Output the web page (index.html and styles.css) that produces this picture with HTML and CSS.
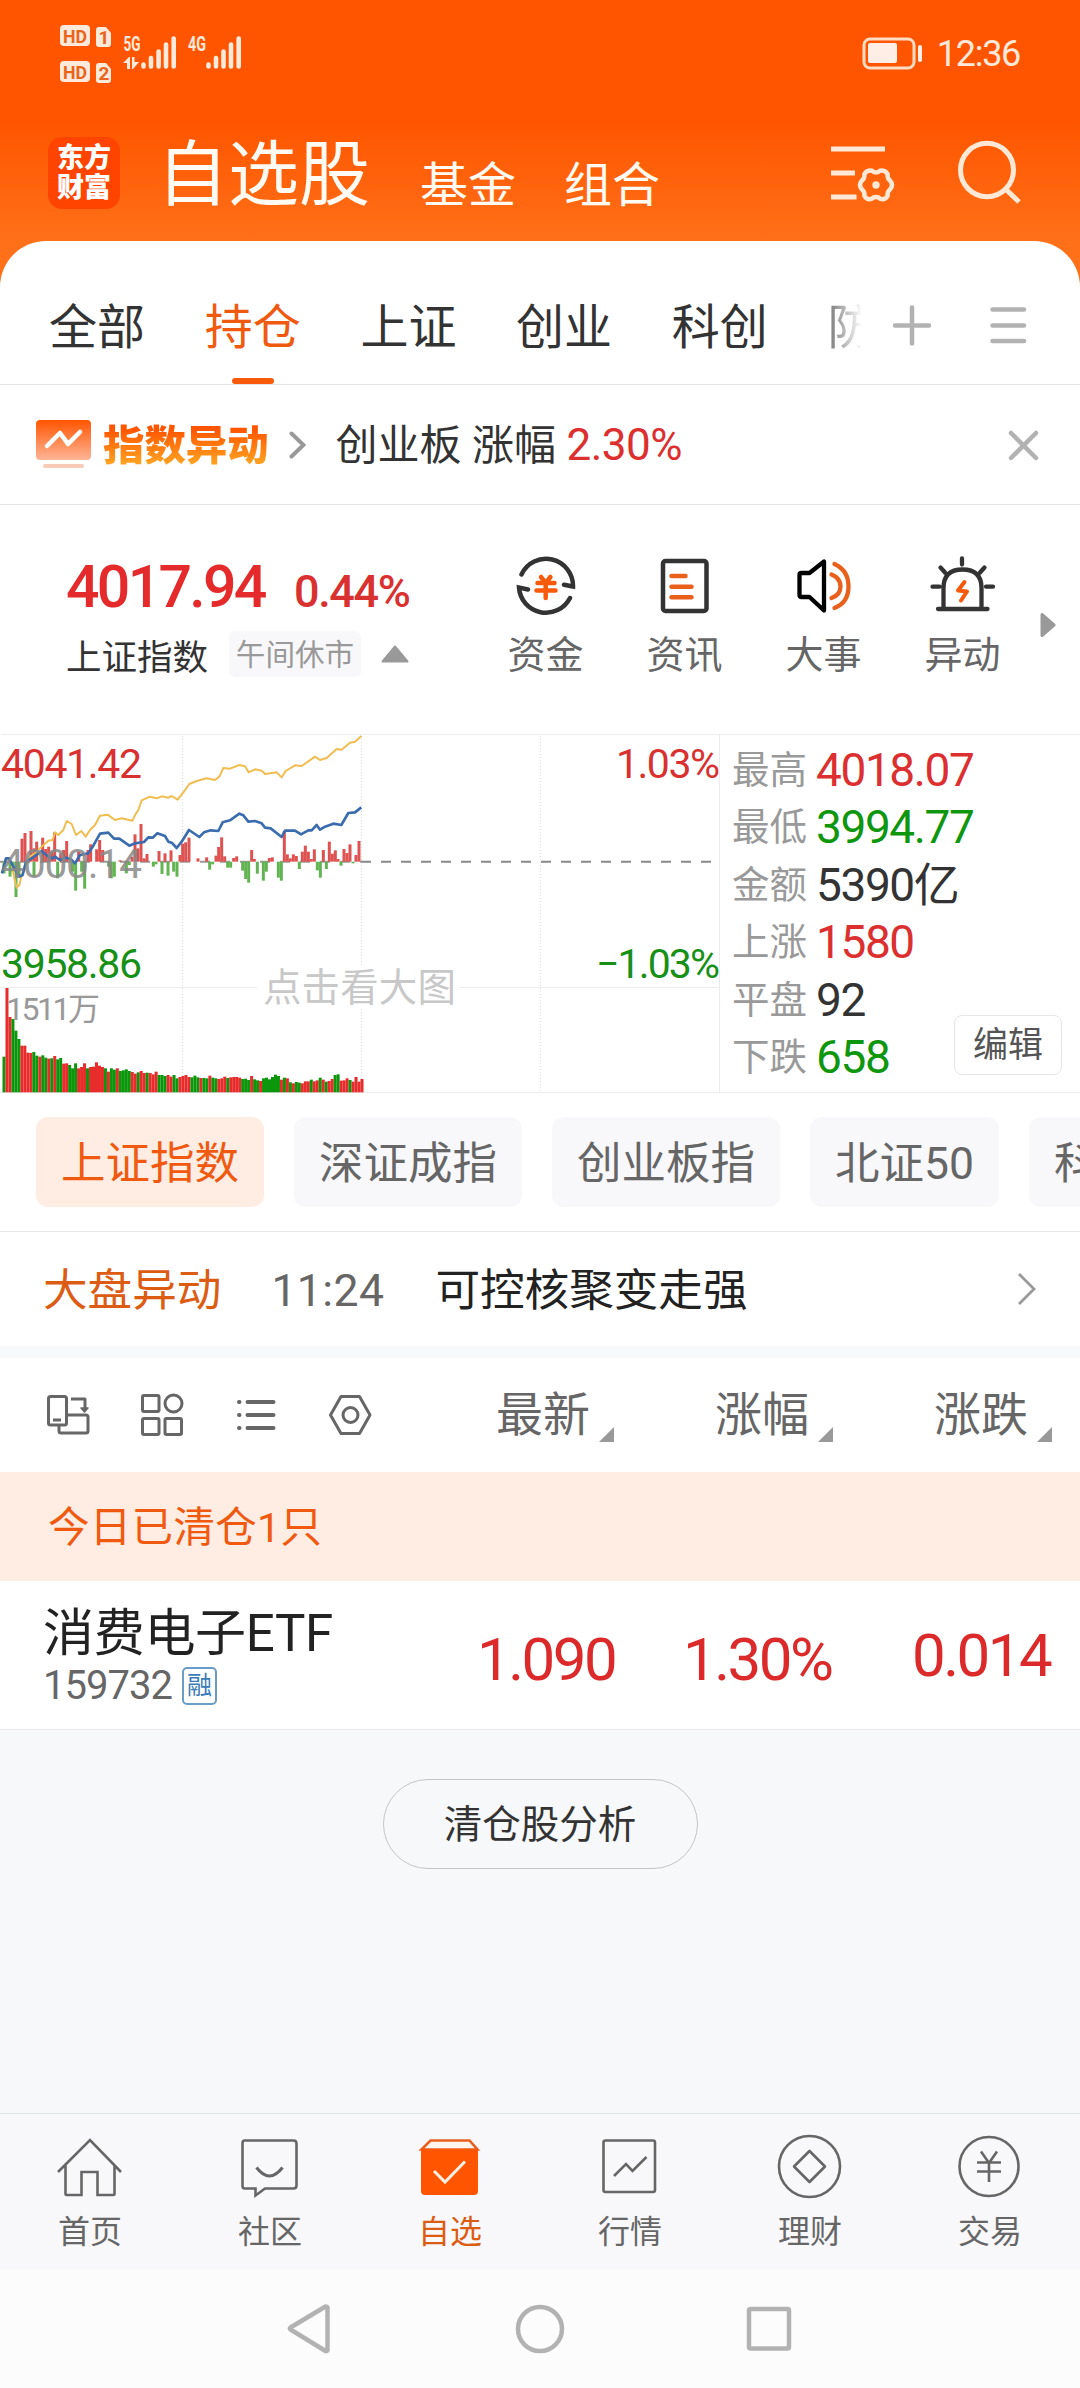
FILE: index.html
```html
<!DOCTYPE html>
<html lang="zh-CN">
<head>
<meta charset="utf-8">
<title>自选股</title>
<link rel="stylesheet" href="styles.css">
</head>
<body>
<div class="app">
  <div class="top">
    <div class="status">
      <svg class="status-left" width="190" height="62" viewBox="58 22 190 62" fill="#ffe9db">
        <rect x="60" y="25" width="30" height="21" rx="4"/>
        <rect x="60" y="61" width="30" height="21" rx="4"/>
        <path d="M99 27h7l5 6v11q0 3-3 3h-9q-3 0-3-3V30q0-3 3-3zM99 63h7l5 6v11q0 3-3 3h-9q-3 0-3-3V66q0-3 3-3z"/>
        <g class="hd"><text x="63" y="42.500" textLength="24" lengthAdjust="spacingAndGlyphs">HD</text><text x="63" y="78.500" textLength="24" lengthAdjust="spacingAndGlyphs">HD</text><text x="98.500" y="44">1</text><text x="98.500" y="80">2</text></g>
        <g class="net"><text x="123.500" y="51" textLength="17" lengthAdjust="spacingAndGlyphs">5G</text><text x="188" y="51" textLength="18" lengthAdjust="spacingAndGlyphs">4G</text></g>
        <path d="M123 63l6-6h1v12h-3v-6zM132 57h2.500v5h4.500l-6 7h-1z"/>
        <g stroke="#ffe9db" stroke-width="4.600" stroke-linecap="round"><path d="M143.500 64.500v2M151 58v8.500M158.600 51.500v15M166 44.500v22M173.700 38.500v28M208.500 64.500v2M216 58v8.500M223.500 51.500v15M231 44.500v22M238.700 38.500v28"/></g>
      </svg>
      <div class="status-right">
        <svg width="62" height="33" viewBox="862 37 62 33"><rect x="864" y="39" width="50" height="29" rx="6" fill="none" stroke="#ffdcc4" stroke-width="3"/><rect x="868" y="43" width="29" height="20" rx="2" fill="#ffeee6"/><rect x="918" y="45" width="4" height="17" rx="2" fill="#ffeee6"/></svg>
        <span class="clock">12:36</span>
      </div>
    </div>
    <div class="header">
      <div class="logo"><span>东方</span><span>财富</span></div>
      <span class="h-main">自选股</span><span class="h-sub">基金</span><span class="h-sub">组合</span>
      <svg class="h-icons" width="196" height="70" viewBox="830 140 196 70" fill="none" stroke="#ffe9d6" stroke-width="5">
        <path d="M831 149h54M831 173h24M831 197h25.500"/>
        <path stroke-linejoin="round" stroke-width="4.500" d="M876 172.500q2.500 0 4-1.700 4.500-1 7.500 3-.3 4.500 2.500 6.700 4 4.500 0 9-2.800 2-2.500 6.500-2.500 4.500-7.500 2.700-1.500-1.700-4-1.700t-4 1.700q-5 1.800-7.500-2.700.3-4.500-2.500-6.500-4-4.500 0-9 2.800-2.200 2.500-6.700 3-4 7.500-3 1.500 1.700 4 1.700z"/>
        <circle cx="876" cy="185" r="3.700" fill="#ffe9d6" stroke="none"/>
        <ellipse cx="987" cy="170" rx="26.500" ry="26.700"/><path d="M1005 188.500l14 13.500"/>
      </svg>
    </div>
    <div class="tabs">
      <div class="tab-list"><span>全部</span><span class="on">持仓</span><span>上证</span><span>创业</span><span>科创</span><span class="fade">防</span></div>
      <svg width="136" height="48" viewBox="892 301 136 48" stroke="#b2b2b2" stroke-width="4.500" stroke-linecap="round"><path d="M895 326.500h34M912 308.500v36M992.500 310.500h31.500M992.500 326.500h31.500M992.500 342h31.500"/></svg>
    </div>
  </div>

  <div class="alert">
    <svg width="56" height="52" viewBox="36 420 56 52"><defs><linearGradient id="ag" x1="0" y1="0" x2="0" y2="1"><stop offset="0" stop-color="#ff5500"/><stop offset="1" stop-color="#ffb598"/></linearGradient></defs><rect x="36" y="421" width="55" height="40" rx="4" fill="url(#ag)"/><rect x="43" y="465" width="41" height="4" rx="2" fill="#f8cdb8"/><path d="M47 447l13-13 8 11 12-12" fill="none" stroke="#fff" stroke-width="4.500" stroke-linecap="round" stroke-linejoin="round"/></svg>
    <span class="alert-name">指数异动</span>
    <svg class="alert-go" width="18" height="30" viewBox="287 430 18 30" fill="none" stroke="#999" stroke-width="4" stroke-linecap="round"><path d="M290.500 433.500l12 11.500-12 11.500"/></svg>
    <span class="alert-text">创业板 涨幅 <b>2.30%</b></span>
    <svg class="alert-x" width="32" height="32" viewBox="1008 429 32 32" stroke="#b2b2b2" stroke-width="4.500" stroke-linecap="round"><path d="M1011 433l25 25M1036 433l-25 25"/></svg>
  </div>

  <div class="index">
    <div class="quote">
      <div class="quote-num"><span class="price">4017.94</span><span class="pct">0.44%</span></div>
      <div class="quote-name"><span>上证指数</span><span class="rest">午间休市</span><svg width="28" height="18" viewBox="0 0 28 18"><path d="M14 1.500L26.500 16.500h-25z" fill="#999" stroke="#999" stroke-width="2" stroke-linejoin="round"/></svg></div>
    </div>
    <div class="tools">
      <div class="tool"><svg width="70" height="62" viewBox="510 555 70 62" fill="none" stroke="#333" stroke-width="4.500" stroke-linecap="round"><path d="M520.500 574.500a27 27 0 0 1 51.500 12l-9-1.800M569 598a27 27 0 0 1-51-10.500l9 2"/><path stroke="#f85a0c" d="M540 577l4.700 6 4.700-6M536.500 583h17M535.500 590.500h19M544.700 583v15"/></svg><span>资金</span></div>
      <div class="tool"><svg width="70" height="62" viewBox="649.500 555 70 62" fill="none" stroke="#333" stroke-width="4.500" stroke-linecap="round"><rect x="662.500" y="561" width="43.500" height="50" rx="2.500"/><path stroke="#e8601c" d="M671 576h14M671 586.700h20M671 597.300h20"/></svg><span>资讯</span></div>
      <div class="tool"><svg width="70" height="62" viewBox="788.500 555 70 62" fill="none" stroke="#000" stroke-width="4.300" stroke-linecap="round" stroke-linejoin="round"><path d="M823.500 561.500v49l-14.500-13.500h-8q-2 0-2-2v-20q0-2 2-2h8z"/><path stroke="#e8601c" d="M831 574.500q9 3.500 9 12t-9 11.500M834 564q14 6.500 14 22.500T834 608"/></svg><span>大事</span></div>
      <div class="tool"><svg width="70" height="62" viewBox="927.500 555 70 62" fill="none" stroke="#333" stroke-width="4.300" stroke-linecap="round"><path d="M943 608v-20q0-18.500 19-18.500T981 588v20M937.500 609h49.500M961.500 558.500v6M940 567.500l4.500 5M984 567.500l-4.500 5M932 586.700h7M985.500 586.700h7"/><path stroke="#f85a0c" stroke-width="4" stroke-linejoin="round" d="M964 582l-6.500 8.500 9 1-6 9"/></svg><span>异动</span></div>
    </div>
    <svg class="more" width="16" height="26" viewBox="0 0 16 26"><path d="M2 2.500L14 13 2 23.500z" fill="#999" stroke="#999" stroke-width="3" stroke-linejoin="round"/></svg>
  </div>

  <div class="market">
    <svg class="chart" width="720" height="359" viewBox="0 734 720 359">
      <g fill="none" stroke="#ececee" stroke-width="1"><path d="M1 734.500h719M0 1092.500h720M0 987.500h257M460 987.500h260" /><path d="M719.500 734v359"/><path stroke="#dcdce0" stroke-dasharray="1 2" d="M182.500 736v356M361.500 736v232M361.500 1006v86M540.500 736v356"/></g>
      <path d="M361 861.800h352" stroke="#888" stroke-width="2" stroke-dasharray="10 10"/>
      <path d="M0 861.800h362" stroke="#999" stroke-width="2" stroke-dasharray="10 10"/>
      <g transform="translate(0 725) scale(.33333)">
        <g id="flow"></g><g id="volume"></g>
        <polyline fill="none" stroke="#f0bd50" stroke-width="6" stroke-linejoin="round" points="6,445 15,405 25,400 35,415 42,455 50,488 58,480 64,455 75,425 90,395 105,385 125,365 145,347 158,345 165,322 175,330 190,315 200,288 215,297 228,330 244,318 257,335 270,315 285,300 300,272 323,269 345,285 365,280 397,287 408,265 415,255 425,226 450,215 470,220 485,214 505,218 515,213 533,224 550,202 568,177 590,168 620,160 645,165 658,155 670,129 690,131 718,120 735,124 746,142 765,133 785,137 795,147 830,142 845,157 857,138 885,121 905,123 945,95 960,105 980,99 1010,72 1025,74 1050,53 1065,50 1084,33"/>
        <polyline fill="none" stroke="#3b6cae" stroke-width="8" stroke-linejoin="round" points="6,445 18,400 27,400 40,425 58,455 68,450 78,410 95,400 125,378 145,395 158,400 165,395 180,405 200,398 215,405 225,415 240,390 265,385 280,362 300,326 325,323 342,341 358,341 388,362 405,355 432,351 445,337 458,338 472,325 495,333 505,350 515,353 530,369 545,350 567,315 598,336 612,322 632,316 655,318 668,292 690,286 718,266 730,271 745,290 765,288 785,295 795,308 812,310 845,336 855,317 885,317 903,328 925,316 935,316 950,300 960,314 975,305 1000,296 1024,300 1045,264 1065,262 1084,247"/>
      </g>
      <g class="axis">
        <text x="1" y="778" fill="#d93030" textLength="141">4041.42</text>
        <text x="1" y="877.500" fill="#888" fill-opacity=".85" textLength="141">4000.14</text>
        <text x="1" y="977.500" fill="#169016" textLength="141">3958.86</text>
        <text x="616" y="778" fill="#d93030" textLength="104">1.03%</text>
        <text x="596" y="977.500" fill="#169016" textLength="124">−1.03%</text>
        <text class="vol" x="6" y="1020" fill="#999" textLength="94">1511万</text>
        <text class="hint" x="263" y="1000.500" fill="#c8c8c8" textLength="193">点击看大图</text>
      </g>
    </svg>
    <div class="stats">
      <div><span>最高</span><b class="red">4018.07</b></div>
      <div><span>最低</span><b class="green">3994.77</b></div>
      <div><span>金额</span><b>5390亿</b></div>
      <div><span>上涨</span><b class="red">1580</b></div>
      <div><span>平盘</span><b>92</b></div>
      <div><span>下跌</span><b class="green">658</b></div>
      <div class="edit">编辑</div>
    </div>
  </div>

  <div class="chips"><span class="on">上证指数</span><span>深证成指</span><span>创业板指</span><span>北证50</span><span>科创50</span></div>

  <div class="news"><span class="news-tag">大盘异动</span><span class="news-time">11:24</span><span class="news-title">可控核聚变走强</span><svg width="20" height="34" viewBox="0 0 20 34" fill="none" stroke="#999" stroke-width="2.800"><path d="M2 2l15 15L2 32"/></svg></div>

  <div class="cols">
    <svg width="330" height="46" viewBox="44 1392 330 46" fill="none" stroke="#666" stroke-width="3" stroke-linejoin="round">
      <rect x="48.500" y="1396.500" width="18" height="28.500" rx="2"/><path d="M53 1420h8M59 1426v5q0 2 2 2h25q2 0 2-2v-14q0-2-2-2H68M71 1399h14v10"/><path d="M81 1408h7l-3.500 4z" fill="#666" stroke-width="1.500"/>
      <rect x="142.500" y="1395.500" width="16.500" height="16" rx="1.500"/><ellipse cx="173.500" cy="1403.500" rx="8.500" ry="8.500"/><rect x="142.500" y="1418.500" width="16.500" height="16" rx="1.500"/><rect x="165" y="1418.500" width="16.500" height="16" rx="1.500"/>
      <path stroke-width="4" stroke-linecap="round" d="M247.500 1402h26M247.500 1415h26M247.500 1428h26M239 1402h.5M239 1415h.5M239 1428h.5"/>
      <path d="M341 1396.500h18.500l10.500 18.500-10.500 18.500H341L330.500 1415z"/><circle cx="350.500" cy="1415" r="7.500"/>
    </svg>
    <div class="col c1">最新<i></i></div><div class="col">涨幅<i></i></div><div class="col c3">涨跌<i></i></div>
  </div>

  <div class="cleared">今日已清仓1只</div>

  <div class="stock">
    <div class="stock-id"><div class="stock-name">消费电子ETF</div><div class="stock-code">159732<span>融</span></div></div>
    <span class="v v1">1.090</span><span class="v v2">1.30%</span><span class="v v3">0.014</span>
  </div>

  <div class="empty"><span>清仓股分析</span></div>

  <div class="tabbar">
    <div><svg viewBox="50 2130 80 70"><path d="M58 2172l32-32 31 32M65.500 2165v29q0 1 1 1h15v-23h16v23h16q1 0 1-1v-29"/></svg><span>首页</span></div>
    <div><svg viewBox="230 2130 80 70"><path d="M244.500 2140.500h49q3 0 3 3v42q0 3-3 3H265l-9.500 7v-7h-11q-2 0-2-3v-42q0-3 2-3z"/><path stroke-width="3" d="M256.500 2167.500q13 17 26 0"/></svg><span>社区</span></div>
    <div class="on"><svg viewBox="410 2130 80 70"><path d="M421.500 2149.500l9-9h39l8 9z" fill="#fff4ee" stroke="#e86020"/><path d="M421 2149h57v42q0 4-4 4h-49q-4 0-4-4z" fill="#ff5500" stroke="none"/><path stroke="#fff0e4" stroke-width="3" d="M434 2171l11 11 20-20.500"/></svg><span>自选</span></div>
    <div><svg viewBox="590 2130 80 70"><rect x="603.500" y="2140.500" width="51.500" height="51.500" rx="2"/><path d="M614 2176l12-12 6.500 7 14-14"/></svg><span>行情</span></div>
    <div><svg viewBox="770 2130 80 70"><circle cx="809.500" cy="2166.500" r="30.500"/><path stroke-linejoin="round" d="M809.500 2151l15.500 15.500-15.500 15.500-15.500-15.500z"/></svg><span>理财</span></div>
    <div><svg viewBox="950 2130 80 70"><circle cx="989" cy="2166.500" r="29.500"/><path d="M981 2151.500l8 11.500 8-11.500M977 2162.500h24M977 2171.500h24M989 2162v20"/></svg><span>交易</span></div>
  </div>

  <div class="nav"><svg width="510" height="56" viewBox="285 2301 510 56" fill="none" stroke="#b2b2b2" stroke-width="4.500" stroke-linejoin="round"><path d="M327.500 2307.500v43q-1 1-2 .5l-35-21.500q-1-1 0-2l35-21q1.500 0 2 1z"/><circle cx="540" cy="2329" r="22"/><rect x="749" y="2309" width="40" height="39.500" rx="1.500"/></svg></div>
</div>
<script src="chart.js"></script>
</body>
</html>
```
FILE: chart.js
```js
// Minute volume: height in chart units, g = falling minute, r = rising minute
const volume = "107g 313r 226r 220g 185g 160g 140r 140r 119r 118r 121g 110g 107r 111g 104g 101r 102g 109r 99g 103g 86r 87r 82g 72g 87g 72r 76r 87r 72g 76r 77r 90r 80r 76r 72g 62r 72g 68g 72r 64g 66g 69g 64g 61r 56r 60g 64r 58r 59g 58r 54r 62r 52g 52g 49g 52r 47r 52g 42g 46r 49r 52r 46r 45g 50g 45g 43r 43g 42g 50r 44g 42g 40r 42r 47r 43g 45r 46r 46r 44r 40g 41g 37g 49r 39g 36g 34r 42g 44g 39g 46g 53g 49g 38r 44g 42r 30g 27r 31g 29g 27r 33r 33r 38g 33r 36r 44g 38r 32g 34r 40r 52g 54g 35r 36r 42r 37g 32r 46r 32r 40r";
// Net flow around the previous close: [x, y of the bar's far end]
const flow = [[12,445],[30,455],[39,440],[48,516],[57,450],[66,341],[75,324],[84,415],[93,318],[102,370],[102,455],[110,350],[128,338],[137,372],[146,365],[155,380],[164,322],[173,460],[182,385],[191,375],[200,348],[218,440],[227,497],[236,380],[245,440],[254,491],[264,375],[272,358],[290,373],[299,345],[308,375],[326,425],[334,460],[343,455],[360,406],[379,445],[388,420],[396,395],[405,328],[414,370],[423,297],[432,400],[441,387],[460,425],[468,418],[477,378],[486,447],[495,385],[504,452],[513,376],[521,440],[531,455],[540,390],[548,356],[557,352],[567,338],[594,400],[620,397],[629,434],[638,418],[648,392],[656,366],[665,337],[674,394],[683,428],[692,428],[701,399],[710,394],[728,437],[737,462],[746,473],[755,375],[763,402],[772,446],[790,467],[799,440],[808,399],[817,397],[835,458],[844,467],[853,318],[862,388],[871,400],[880,388],[889,393],[898,432],[907,380],[916,362],[925,380],[934,402],[943,373],[952,436],[961,458],[970,375],[979,432],[988,350],[997,386],[1006,376],[1014,402],[1023,422],[1032,372],[1041,384],[1050,358],[1059,415],[1068,390],[1077,348]];

function bar(parent, x, y1, y2, color) {
  const r = document.createElementNS("http://www.w3.org/2000/svg", "rect");
  r.setAttribute("x", x - 4.5);
  r.setAttribute("y", Math.min(y1, y2));
  r.setAttribute("width", 9);
  r.setAttribute("height", Math.abs(y1 - y2));
  r.setAttribute("fill", color);
  parent.appendChild(r);
}
const vol = document.getElementById("volume");
volume.split(" ").forEach((v, i) => {
  bar(vol, 12 + 8.95 * i, 1102, 1102 - parseInt(v, 10), v.endsWith("g") ? "#0b960b" : "#e82c2c");
});
const fl = document.getElementById("flow");
flow.forEach(([x, y]) => bar(fl, x, 410, y, y < 410 ? "#de5252" : "#62b452"));
```
FILE: styles.css
```css
* { box-sizing: border-box; }
body { margin: 0; background: #f7f8fa; font-family: Roboto, "Noto Sans CJK SC", sans-serif; color: #333; }
svg { display: block; flex: none; }
span, b { white-space: nowrap; }
b { font-weight: 400; }
.red { color: #dc2f2f; }
.green { color: #0f960f; }
.app { width: 1080px; height: 2388px; display: flex; flex-direction: column; overflow: hidden; }
.app > div { flex: none; }

.top { background: linear-gradient(#ff5500 0, #ff5500 120px, #ff7018 241px); }
.status { height: 92px; display: flex; justify-content: space-between; padding: 22px 60px 0 58px; }
.status-right { display: flex; height: 33px; margin-top: 15px; align-items: center; gap: 13px; }
.clock { color: #ffe9db; font-size: 36px; line-height: 33px; letter-spacing: -1.300px; padding-top: 2px; }
.hd { fill: #e8651c; font: 700 19px Roboto, sans-serif; }
.net { font: 700 21px Roboto, sans-serif; }
.header { height: 149px; display: flex; align-items: flex-start; padding: 45px 54px 0 48px; color: #fffaf2; }
.logo { width: 72px; height: 72px; border-radius: 14px; background: #ff4400; color: #fff; display: flex; flex-direction: column; align-items: center; justify-content: center; font-size: 27px; font-weight: 900; line-height: 30px; }
.h-main { font-size: 71px; line-height: 76px; margin-left: 37px; }
.h-sub { font-size: 48px; line-height: 54px; margin: 22px 0 0 48px; }
.h-main + .h-sub { margin-left: 50px; }
.h-icons { margin: 3px 0 0 auto; }
.tabs { height: 144px; border-radius: 46px 46px 0 0; background: #fff; border-bottom: 1px solid #e3e3e3; display: flex; justify-content: space-between; padding: 0 52px 0 49px; }
.tab-list { width: 815px; display: flex; gap: 59.700px; overflow: hidden; font-size: 48px; line-height: 56px; padding-top: 59px; }
.tab-list .on { color: #f05a10; display: flex; flex-direction: column; align-items: center; justify-content: space-between; }
.tab-list .on::after { content: ""; width: 42px; height: 6px; border-radius: 3px; background: #f85a0c; }
.fade { background: linear-gradient(90deg, #777, #fff 34px); -webkit-background-clip: text; background-clip: text; color: transparent; }
.tabs > svg { margin-top: 59px; }

.alert { height: 120px; background: #fff; border-bottom: 1px solid #e3e3e3; display: flex; align-items: center; padding: 0 40px 0 36px; }
.alert-name { font-size: 41.400px; font-weight: 900; line-height: 48px; margin: 3px 0 0 11px; background: linear-gradient(#ff5500 15%, #ffa020 85%); -webkit-background-clip: text; background-clip: text; color: transparent; }
.alert-go { margin-left: 19px; }
.alert-text { font-size: 42px; line-height: 50px; margin: 2px 0 0 30px; }
.alert-text b { color: #dc2f2f; font-size: 44px; letter-spacing: -.5px; }
.alert-x { margin-left: auto; }

.index { height: 229px; background: #fff; display: flex; align-items: flex-start; padding: 50px 24px 0 66px; }
.quote { width: 410px; }
.quote-num { display: flex; align-items: baseline; color: #e42a2a; font-weight: 500; height: 76px; line-height: 64px; }
.price { width: 228px; font-size: 59px; letter-spacing: -2.700px; }
.pct { font-size: 45px; letter-spacing: -1.400px; color: #d93030; }
.quote-name { display: flex; align-items: center; font-size: 35.500px; height: 46px; }
.rest { font-size: 29.600px; color: #999; background: #f8f8fa; border-radius: 6px; width: 132px; height: 46px; line-height: 48px; text-align: center; margin: 0 20px 0 21px; }
.tools { display: flex; }
.tool { width: 139px; display: flex; flex-direction: column; align-items: center; gap: 14px; font-size: 38px; line-height: 49px; color: #666; }
.more { margin: 57px 0 0 auto; }

.market { height: 359px; background: #fff; display: flex; border-bottom: 1px solid #ececee; }
.axis { font-size: 41px; }
.vol { font-size: 32px; }
.hint { font-size: 38.500px; paint-order: stroke; stroke: #fff; stroke-width: 8px; }
.stats { position: relative; flex: 1; border-top: 1px solid #ececee; padding: 7px 0 0 12px; }
.stats > div:not(.edit) { display: flex; gap: 9px; height: 57.400px; line-height: 57.400px; font-size: 37.500px; color: #999; align-items: center; }
.stats b { font-size: 46px; letter-spacing: -1.400px; color: #333; }
.stats b.red { color: #dc2f2f; }
.stats b.green { color: #0f960f; }
.edit { position: absolute; left: 234px; top: 280px; width: 108px; height: 60px; border: 1px solid #e6e6e8; border-radius: 8px; background: #fff; font-size: 35px; line-height: 60px; text-align: center; color: #555; }

.chips { height: 139px; background: #fff; border-bottom: 1px solid #e9e9eb; display: flex; gap: 30px; padding: 24px 0 0 36px; overflow: hidden; }
.chips span { flex: none; height: 90px; border-radius: 12px; padding: 0 25px; background: #f8f8fa; font-size: 44.500px; line-height: 94px; color: #666; }
.chips .on { background: #ffede4; color: #f05a10; }

.news { height: 114px; background: #fff; display: flex; align-items: center; padding: 3px 43px 0 43px; font-size: 44.600px; line-height: 60px; }
.news-tag { color: #dc5c14; }
.news-time { margin-left: 50px; width: 164px; color: #666; letter-spacing: .4px; }
.news-title { color: #222; }
.news svg { margin: 0 0 4px auto; }

.cols { height: 126px; border-top: 12px solid #f7f8fa; background: #fff; display: flex; align-items: center; padding-left: 44px; font-size: 47px; line-height: 56px; color: #666; }
.col { flex: none; width: 219px; display: flex; gap: 9px; align-items: flex-end; }
.c1 { margin-left: 122px; }
.c3 { width: 130px; }
.col i { width: 15px; height: 15px; background: #999; clip-path: polygon(100% 0, 100% 100%, 0 100%); margin-bottom: 1px; }

.cleared { height: 109px; background: #ffede4; color: #f05a10; font-size: 41.500px; line-height: 111px; padding-left: 48px; letter-spacing: .300px; }
.stock { height: 149px; background: #fff; display: flex; border-bottom: 1px solid #e9e9eb; padding-left: 43px; }
.stock-id { width: 434px; padding-top: 23px; }
.stock-name { font-size: 51px; line-height: 60px; color: #222; letter-spacing: -.300px; }
.stock-code { display: flex; align-items: center; gap: 10px; font-size: 40px; line-height: 44px; color: #666; letter-spacing: -1px; }
.stock-code span { width: 35px; height: 38px; border: 2px solid #6a9cc8; border-radius: 5px; color: #3a7cb8; font-size: 25px; line-height: 33px; text-align: center; letter-spacing: 0; }
.v { font-size: 60px; line-height: 70px; letter-spacing: -2.500px; color: #dc2a2a; margin-top: 44px; }
.v1 { width: 206px; }
.v2 { width: 229px; }
.v3 { margin-top: 40px; }

.empty { height: 383px; padding-top: 49px; display: flex; justify-content: center; }
.empty span { width: 315px; height: 90px; border: 1.500px solid #c4c5c8; border-radius: 45px; font-size: 38.500px; line-height: 90px; text-align: center; }

.tabbar { height: 157px; background: #f8f8fb; border-top: 1px solid #e2e3e6; display: flex; }
.tabbar > div { flex: 1; display: flex; flex-direction: column; align-items: center; padding-top: 16px; font-size: 32px; line-height: 40px; gap: 12px; color: #666; }
.tabbar svg { width: 80px; height: 70px; fill: none; stroke: #666; stroke-width: 2.600; }
.tabbar .on { color: #dc5c14; }
.nav { height: 118px; background: #fcfcfc; display: flex; justify-content: center; padding-top: 31px; }
```
